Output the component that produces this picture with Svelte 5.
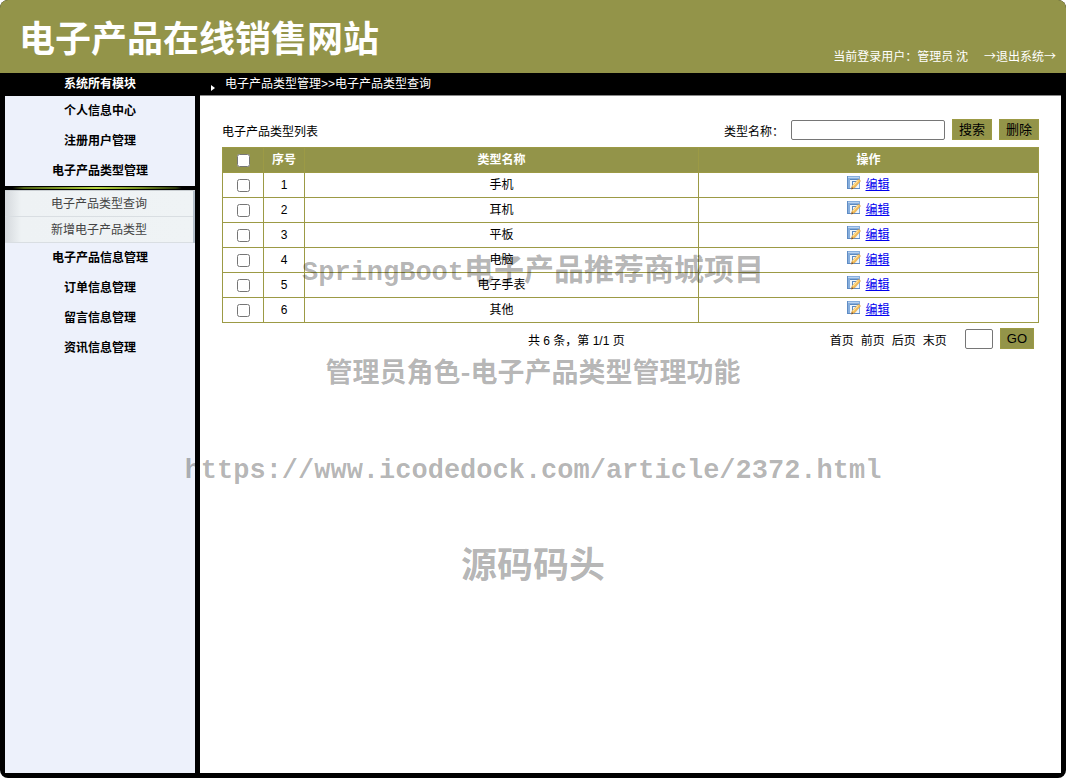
<script>
  const siteName = '电子产品在线销售网站';

  const menuTop = ['个人信息中心', '注册用户管理', '电子产品类型管理'];
  const subMenu = ['电子产品类型查询', '新增电子产品类型'];
  const menuBottom = ['电子产品信息管理', '订单信息管理', '留言信息管理', '资讯信息管理'];
  const pages = ['首页', '前页', '后页', '末页'];

  let rows = $state([
    { id: 1, name: '手机', checked: false },
    { id: 2, name: '耳机', checked: false },
    { id: 3, name: '平板', checked: false },
    { id: 4, name: '电脑', checked: false },
    { id: 5, name: '电子手表', checked: false },
    { id: 6, name: '其他', checked: false }
  ]);
  let keyword = $state('');
  let pageNo = $state('');
  let allChecked = $state(false);

  function toggleAll() {
    rows.forEach((row) => (row.checked = allChecked));
  }
</script>

{#snippet editIcon()}
  <svg class="edit-icon" viewBox="0 0 14 14" aria-hidden="true">
    <rect x="0" y="0" width="13" height="13" fill="#86aedd" />
    <path d="M0 0h1v13h-1zM0 12h13v1h-13z" fill="#5f8cc4" />
    <rect x="1" y="1" width="11" height="1" fill="#b9d3f1" />
    <rect x="3" y="3" width="9" height="9" fill="#f1f7fd" />
    <path d="M3 3h9v1h-9zM5 5h5v1h-5zM5 5h1v5h-1z" fill="#5c88bd" />
    <path d="M4.4 13.2l.6-3.2 6-6.4q1.600-.6 2.600 1.400l-5.800 6.800z" fill="#f4bc55" stroke="#c98d3c" stroke-width=".4" />
    <path d="M5.800 10.100l5.600-5.700" stroke="#ffe6a4" stroke-width="1.200" />
    <path d="M4.4 13.2l.4-2.200 1.700 1.600z" fill="#6b4a30" />
  </svg>
{/snippet}

<div class="page">
  <header class="banner">
    <h1>{siteName}</h1>
    <div class="user">
      <span>当前登录用户：管理员 沈</span>
      <a href="#logout">→退出系统→</a>
    </div>
  </header>

  <div class="body">
    <aside class="side">
      <h2>系统所有模块</h2>
      <nav class="menu">
        {#each menuTop as item}
          <a class="item" href="#menu">{item}</a>
        {/each}
        <div class="sub">
          {#each subMenu as item}
            <a class="sub-item" href="#sub">{item}</a>
          {/each}
        </div>
        {#each menuBottom as item}
          <a class="item" href="#menu">{item}</a>
        {/each}
      </nav>
    </aside>

    <div class="main">
      <div class="crumb">
        <span class="arrow"></span>
        <span>电子产品类型管理&gt;&gt;电子产品类型查询</span>
      </div>
      <main class="content">
        <form class="toolbar" onsubmit={(e) => e.preventDefault()}>
          <span class="caption">电子产品类型列表</span>
          <label for="keyword">类型名称：</label>
          <input id="keyword" class="box keyword" type="text" bind:value={keyword}>
          <button class="btn">搜索</button>
          <button class="btn" type="button">删除</button>
        </form>

        <table>
          <colgroup>
            <col class="narrow">
            <col class="narrow">
            <col>
            <col class="actions">
          </colgroup>
          <thead>
            <tr>
              <th><input type="checkbox" aria-label="全选" bind:checked={allChecked} onchange={toggleAll}></th>
              <th>序号</th>
              <th>类型名称</th>
              <th>操作</th>
            </tr>
          </thead>
          <tbody>
            {#each rows as row (row.id)}
              <tr>
                <td><input type="checkbox" aria-label={row.name} bind:checked={row.checked}></td>
                <td>{row.id}</td>
                <td>{row.name}</td>
                <td>
                  <div class="edit">
                    {@render editIcon()}
                    <a href="#edit">编辑</a>
                  </div>
                </td>
              </tr>
            {/each}
          </tbody>
        </table>

        <form class="pager" onsubmit={(e) => e.preventDefault()}>
          <span class="total">共 6 条，第 1/1 页</span>
          <div class="links">
            {#each pages as page}
              <a href="#page">{page}</a>
            {/each}
          </div>
          <input class="box page-no" type="text" aria-label="页码" bind:value={pageNo}>
          <button class="btn">GO</button>
        </form>
      </main>
    </div>
  </div>

  <div class="watermark">
    <p class="project"><span class="latin">SpringBoot</span>电子产品推荐商城项目</p>
    <p class="feature">管理员角色-电子产品类型管理功能</p>
    <p class="latin">https://www.icodedock.com/article/2372.html</p>
    <p class="brand">源码码头</p>
  </div>
</div>

<style>
:global(body) {
  margin: 0;
  background: #fff;
}

.page {
  position: relative;
  display: flex;
  flex-direction: column;
  box-sizing: border-box;
  min-height: 100vh;
  border-radius: 8px;
  overflow: hidden;
  background: #000;
  font-family: "Liberation Sans", "Noto Sans CJK SC", sans-serif;
  font-size: 12px;
  line-height: 18px;
  color: #000;
}

.banner {
  display: flex;
  justify-content: space-between;
  align-items: flex-end;
  box-sizing: border-box;
  height: 73px;
  padding: 0 10px 8px 19px;
  background: #939449;
  color: #fff;
}
.banner h1 {
  margin: 0;
  font-size: 36px;
  line-height: 50px;
}
.user {
  display: flex;
  gap: 16px;
  font-family: "Noto Sans CJK SC", sans-serif;
}
.user a {
  color: #fff;
  text-decoration: none;
}

.body {
  flex: 1;
  display: flex;
  gap: 5px;
  padding: 0 5px 5px;
}

.side {
  display: flex;
  flex-direction: column;
  width: 190px;
}
.side h2 {
  margin: 0;
  height: 23px;
  font-size: 12px;
  line-height: 22px;
  text-align: center;
  color: #fff;
}
.menu {
  flex: 1;
  background: #edf1fb;
  text-align: center;
}
.item {
  display: block;
  font-weight: bold;
  line-height: 30px;
  color: #000;
  text-decoration: none;
}
.sub {
  border-right: 2px solid #b4bfca;
  background: linear-gradient(to right, #d5d9dd, #eef2f4 16px, #eff3f5);
}
.sub::before {
  content: "";
  display: block;
  height: 2px;
  margin-right: -2px;
  border: solid #000;
  border-width: 1px 0;
  box-shadow: 0 1px #c9ced2;
  background: linear-gradient(to right, #000 4%, #4f6214 10%, #86a02a 30%, #b9d743 48%, #7c9625 70%, #2c380a 90%, #000 93%);
}
.sub-item {
  display: block;
  height: 25px;
  border-bottom: 1px solid #d9dee2;
  line-height: 26px;
  color: #444;
  text-decoration: none;
}
.sub-item:first-child {
  padding-top: 1px;
}

.main {
  flex: 1;
  display: flex;
  flex-direction: column;
  min-width: 0;
}
.crumb {
  display: flex;
  gap: 10px;
  height: 22px;
  padding-left: 11px;
  line-height: 22px;
  color: #fff;
}
.arrow {
  align-self: flex-end;
  margin-bottom: 4px;
  border: 3px solid transparent;
  border-left: 4px solid #fff;
  border-right-width: 0;
  width: 0;
}
.content {
  flex: 1;
  padding: 23px 22px;
  border-top: 1px solid #888;
  background: #fff;
}

.toolbar {
  display: flex;
  align-items: center;
  gap: 7px;
  height: 21px;
  margin-bottom: 7px;
}
.caption {
  flex: 1;
  padding-top: 4px;
}
.toolbar label {
  padding-top: 4px;
}
.box {
  box-sizing: border-box;
  height: 20px;
  padding: 1px 2px;
  border: 1px solid #767676;
  border-radius: 2px;
  background: #fff;
  font: inherit;
}
.keyword {
  width: 154px;
}
.btn {
  height: 21px;
  padding: 0 6px;
  border: 1px solid #9c9a45;
  background: #939449;
  font-family: inherit;
  font-size: 13px;
  line-height: 19px;
  color: #000;
}

table {
  width: 100%;
  border-collapse: collapse;
  table-layout: fixed;
  text-align: center;
}
.narrow {
  width: 41px;
}
.actions {
  width: 340px;
}
th,
td {
  height: 24px;
  padding: 0;
  border: 1px solid #9c9a45;
}
th {
  background: #939449;
  color: #fff;
}
td input,
th input {
  display: block;
  width: 13px;
  height: 13px;
  margin: 0 auto;
}
.edit {
  display: flex;
  justify-content: center;
  gap: 4px;
}
.edit a {
  color: #0000ee;
}
.edit-icon {
  width: 14px;
  height: 14px;
}

.pager {
  display: flex;
  align-items: center;
  height: 21px;
  padding: 5px 5px 0 0;
}
.total {
  flex: 1;
  padding: 4px 0 0 306px;
}
.links {
  display: flex;
  gap: 7px;
  padding-top: 4px;
}
.links a {
  color: #000;
  text-decoration: none;
}
.page-no {
  width: 28px;
  margin: 0 7px 0 18px;
}

.watermark {
  position: absolute;
  top: 250px;
  left: 0;
  right: 0;
  color: rgba(0, 0, 0, .3);
  font-weight: bold;
  text-align: center;
  pointer-events: none;
}
.watermark p {
  margin: 0;
  white-space: nowrap;
}
.latin {
  font-family: "Liberation Mono", monospace;
  font-size: 27px;
  line-height: 40px;
}
.project {
  font-size: 30px;
  line-height: 40px;
}
.watermark .feature {
  margin: 58px 0 60px;
  font-family: "Noto Sans CJK SC", sans-serif;
  font-size: 27px;
  line-height: 40px;
}
.watermark .brand {
  margin-top: 50px;
  font-size: 36px;
  line-height: 50px;
}
</style>
